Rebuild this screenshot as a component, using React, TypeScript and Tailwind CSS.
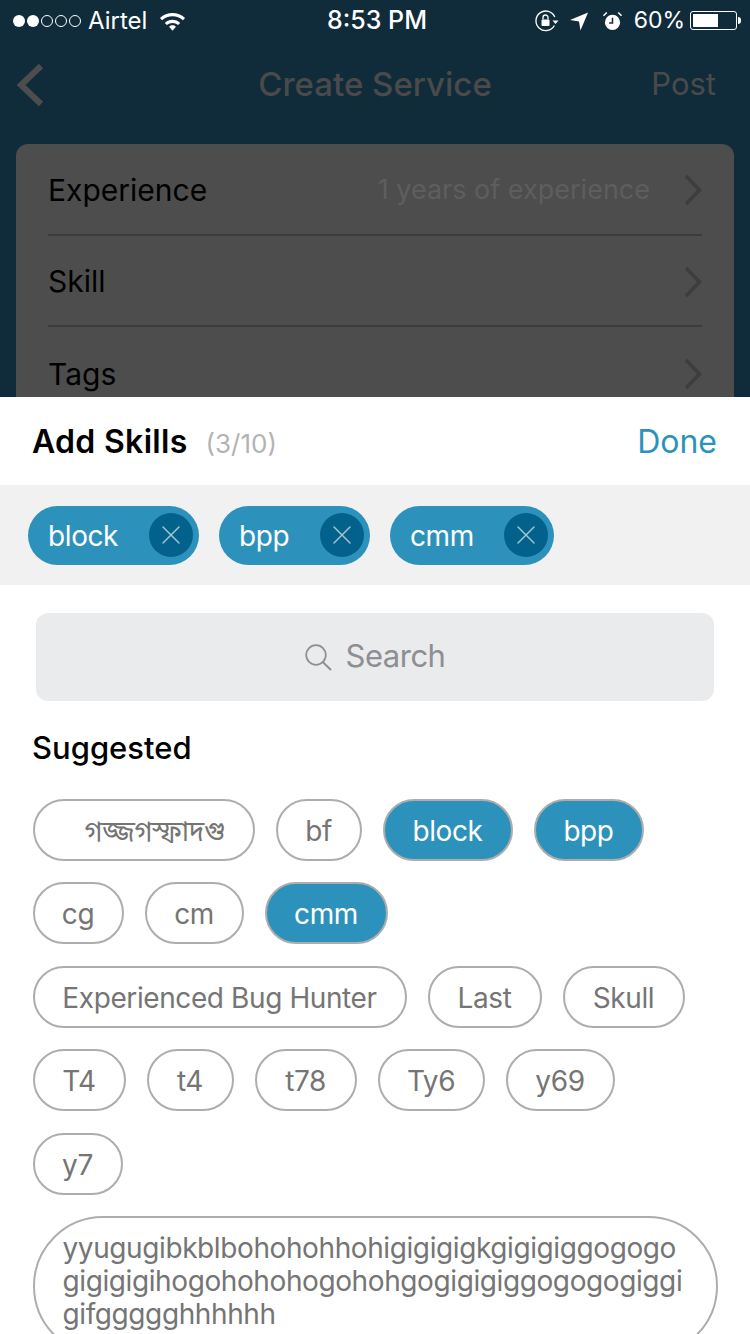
import { X } from "lucide-react";

const font = { fontFamily: '"Inter", "Noto Sans", "Noto Sans Bengali", "Liberation Sans", sans-serif' };

const suggestedRows = [
  [
    { label: "গজ্জগস্ফাদগু", w: "w-[222px]", pad: "pl-[50px]" },
    { label: "bf", w: "w-[86px]" },
    { label: "block", w: "w-[130px]", on: true },
    { label: "bpp", w: "w-[110px]", on: true },
  ],
  [
    { label: "cg", w: "w-[91px]" },
    { label: "cm", w: "w-[99px]" },
    { label: "cmm", w: "w-[123px]", on: true },
  ],
  [
    { label: "Experienced Bug Hunter", w: "w-[374px]" },
    { label: "Last", w: "w-[114px]" },
    { label: "Skull", w: "w-[122px]" },
  ],
  [
    { label: "T4", w: "w-[93px]" },
    { label: "t4", w: "w-[87px]" },
    { label: "t78", w: "w-[102px]" },
    { label: "Ty6", w: "w-[107px]" },
    { label: "y69", w: "w-[109px]" },
  ],
  [{ label: "y7", w: "w-[90px]" }],
];

function SkillChip({ label, width }: { label: string; width: string }) {
  return (
    <div className={`flex h-[59px] items-center justify-between rounded-full bg-[#2d92bb] pl-[20px] pr-[6px] ${width}`}>
      <span className="pt-[1px] text-[28px] leading-none tracking-[-0.4px] text-white">{label}</span>
      <span className="flex h-[44px] w-[44px] items-center justify-center rounded-full bg-[#02628b]">
        <X size={32} strokeWidth={1.1} className="text-[#a4c4d4]" />
      </span>
    </div>
  );
}

function Row({ label, value, divider }: { label: string; value?: string; divider?: boolean }) {
  return (
    <div className={`flex h-[91.5px] shrink-0 items-center justify-between pt-[3px] ${divider ? "border-b-2 border-[#3c3c3c]" : ""}`}>
      <span className="text-[30px] text-black">{label}</span>
      <div className="flex items-center gap-[34px]">
        {value && <span className="text-[27px] text-[#5e5e5e]">{value}</span>}
        <svg width="18" height="32" viewBox="0 0 18 32" fill="none">
          <path d="M2 2 L15.5 16 L2 30" stroke="#3d3d3d" strokeWidth="3.5" />
        </svg>
      </div>
    </div>
  );
}

export default function App() {
  return (
    <div style={font} className="flex h-[1334px] w-[750px] flex-col overflow-hidden bg-white">
      {/* dimmed screen behind the sheet */}
      <div className="flex h-[397px] shrink-0 flex-col overflow-hidden bg-[#102c3b]">
        <div className="flex h-[41px] shrink-0 items-center justify-between pl-[13px] pr-[9px] text-white">
          <div className="flex w-[260px] items-center">
            <div className="flex items-center gap-[2px]">
              <span className="h-[12px] w-[12px] rounded-full bg-white" />
              <span className="h-[12px] w-[12px] rounded-full bg-white" />
              <span className="h-[12px] w-[12px] rounded-full border border-white" />
              <span className="h-[12px] w-[12px] rounded-full border border-white" />
              <span className="h-[12px] w-[12px] rounded-full border border-white" />
            </div>
            <span className="ml-[7px] text-[24px]">Airtel</span>
            <svg width="27" height="20" viewBox="0 0 28 20" className="ml-[12px]">
              <path d="M1 7 C8 0 20 0 27 7 L24.8 9.2 C18.8 3.6 9.2 3.6 3.2 9.2 Z" fill="white" />
              <path d="M6 12 C10.5 7.5 17.5 7.5 22 12 L19.8 14.2 C16.5 11.2 11.5 11.2 8.2 14.2 Z" fill="white" />
              <path d="M10.5 16 C12.5 14 15.5 14 17.5 16 L14 20 Z" fill="white" />
            </svg>
          </div>
          <span className="text-[25px] font-medium">8:53 PM</span>
          <div className="flex w-[260px] items-center justify-end">
            <svg width="24" height="22" viewBox="0 0 24 22" fill="none" className="mr-[11px]">
              <path d="M19.4 15.5 A9.8 9.8 0 1 1 19.8 7" stroke="white" strokeWidth="1.3" />
              <path d="M17.5 10.5 h6 l-3 3.5 Z" fill="white" />
              <rect x="6.5" y="9.5" width="8" height="6.5" rx="1" fill="white" />
              <path d="M8 9.5 V7.5 a2.5 2.5 0 0 1 5 0 V9.5" stroke="white" strokeWidth="1.3" />
            </svg>
            <svg width="19" height="20" viewBox="0 0 20 20" className="mr-[13px]">
              <path d="M19 1 L11 20 L9.5 10.5 L0 9 Z" fill="white" />
            </svg>
            <svg width="21" height="20" viewBox="0 0 22 21" fill="none" className="mr-[11px]">
              <circle cx="11" cy="12" r="8" fill="white" />
              <path d="M11 7 V12.5 H7.5" stroke="#102c3b" strokeWidth="1.6" />
              <path d="M1.5 5 L5 1.5 M20.5 5 L17 1.5" stroke="white" strokeWidth="1.6" />
            </svg>
            <span className="text-[23px]">60%</span>
            <div className="ml-[5px] flex h-[19px] w-[47px] items-center rounded-[3px] border border-white p-[2px]">
              <div className="h-full w-[25px] bg-white" />
            </div>
            <div className="ml-[1px] h-[7px] w-[3px] rounded-r bg-white" />
          </div>
        </div>

        <div className="grid h-[87px] shrink-0 grid-cols-[1fr_auto_1fr] items-center px-[34px]">
          <svg width="28" height="44" viewBox="0 0 28 44" fill="none" className="-ml-[18px]">
            <path d="M25 3 L5 22 L25 41" stroke="#4d4d4d" strokeWidth="6" />
          </svg>
          <span className="whitespace-nowrap text-center text-[33px] font-medium text-[#4a4a4a]">Create Service</span>
          <span className="text-right text-[31px] text-[#4a4a4a]">Post</span>
        </div>

        <div className="mx-[16px] mt-[16px] flex flex-1 flex-col rounded-t-[12px] bg-[#4d4d4d] px-[32px]">
          <Row label="Experience" value="1 years of experience" divider />
          <Row label="Skill" divider />
          <Row label="Tags" />
        </div>
      </div>

      {/* Add Skills sheet */}
      <div className="flex h-[88px] shrink-0 items-center justify-between px-[33px]">
        <div className="flex items-baseline pt-[1px]">
          <span className="-ml-[1px] text-[32px] font-semibold tracking-[0.3px] text-black">Add Skills</span>
          <span className="ml-[18px] text-[26px] text-[#b3b3b3]">(3/10)</span>
        </div>
        <span className="mt-[2px] text-[32px] text-[#2d92bb]">Done</span>
      </div>

      <div className="flex h-[100px] shrink-0 items-center gap-[20px] bg-[#f1f1f1] pl-[28px]">
        <SkillChip label="block" width="w-[171px]" />
        <SkillChip label="bpp" width="w-[151px]" />
        <SkillChip label="cmm" width="w-[164px]" />
      </div>

      <div className="flex flex-1 flex-col px-[32px]">
        <div className="mx-[4px] mt-[28px] flex h-[88px] shrink-0 items-center justify-center gap-[14px] rounded-[12px] bg-[#eaebed]">
          <svg width="27" height="27" viewBox="0 0 27 27" fill="none" className="mt-[1px]">
            <circle cx="11" cy="11" r="9.8" stroke="#8e8e93" strokeWidth="1.7" />
            <path d="M18 18.2 L26 26" stroke="#8e8e93" strokeWidth="1.9" />
          </svg>
          <span className="-mt-[2px] text-[31px] tracking-[-0.5px] text-[#8e8e93]">Search</span>
        </div>

        <div className="mt-[27px] text-[31px] font-medium leading-[40px] text-black">Suggested</div>

        <div className="ml-[0.5px] mt-[30.5px] flex flex-col gap-[21.5px]">
          {suggestedRows.map((row, i) => (
            <div key={i} className="flex gap-[21px]">
              {row.map((chip) => (
                <div
                  key={chip.label}
                  className={`flex h-[62px] items-center rounded-full border-2 border-[#adadad] pt-[2px] text-[28px] tracking-[-0.4px] ${chip.w} ${
                    chip.pad ?? "justify-center"
                  } ${chip.on ? "bg-[#2d92bb] text-white" : "text-[#757575]"}`}
                >
                  {chip.label}
                </div>
              ))}
            </div>
          ))}
          <div className="h-[140px] w-[685px] rounded-[70px] border-2 border-[#adadad] pl-[28px] pt-[14px] text-[28px] leading-[33px] tracking-[-0.4px] text-[#757575]">
            yyugugibkblbohohohhohigigigigkgigigiggogogo
            <br />
            gigigigihogohohohogohohgogigigiggogogogiggi
            <br />
            gifggggghhhhhh
          </div>
        </div>
      </div>
    </div>
  );
}
